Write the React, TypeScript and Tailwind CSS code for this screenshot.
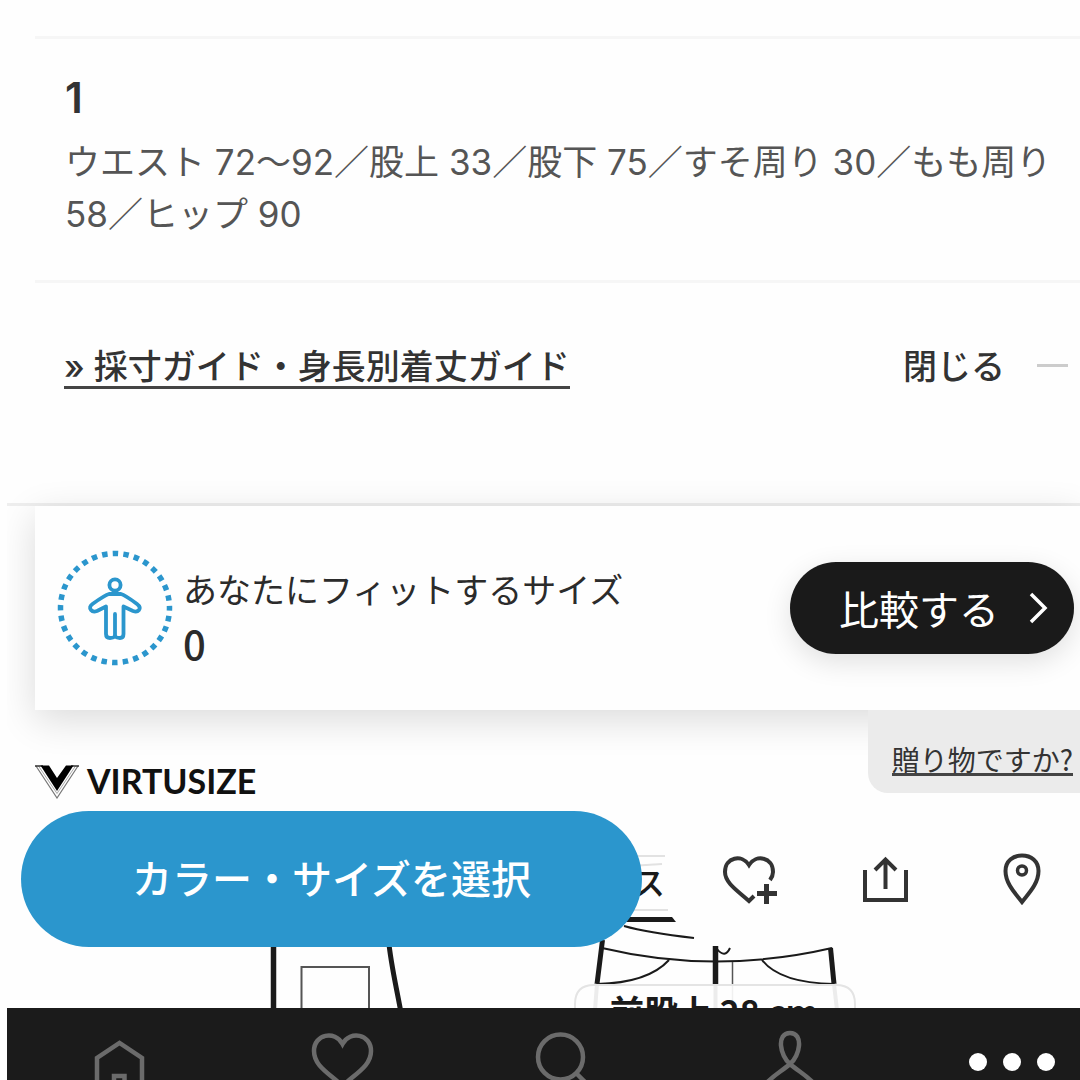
import React from 'react';

const NAV_COLOR = '#6b6b6b';

function BodyIcon() {
  return (
    <svg className="h-[116px] w-[116px] shrink-0" viewBox="57 550 116 116" fill="none" stroke="#2b96cd">
      <circle cx="115" cy="608" r="54.5" strokeWidth="5.5" strokeDasharray="5.500 5.200" strokeDashoffset="2.700" />
      <g strokeWidth="3.8" strokeLinejoin="round" strokeLinecap="round">
        <circle cx="115" cy="585" r="5.6" />
        <path d="M109 594 H121 Q125 595 137 604 Q141 607 139 610 Q137 612.500 133 611 L123.500 606.500 V634 Q123.500 638 120 638 Q116 638 115 636 Q114 638 110 638 Q106 638 106 634 V606.500 L97 611 Q93 612.500 91 610 Q88.500 607 92.500 604 Q105 595 109 594 Z" />
        <path d="M115 614 V636" />
      </g>
    </svg>
  );
}

function VirtusizeLogo() {
  return (
    <a href="#virtusize" className="mt-[55px] flex h-[33px] items-start gap-2 text-[#111]">
      <svg className="h-[34px] w-[44px]" viewBox="35 765 44 34" fill="none">
        <path d="M36 766 L57 798 L78 766" stroke="#777" strokeWidth="1.200" />
        <path d="M38.500 766 L57 793.500 L75.500 766" stroke="#aaa" strokeWidth="1" />
        <path d="M35 766 H43 M71 766 H79" stroke="#333" strokeWidth="1.600" />
        <path d="M40.500 765.500 H49 L57 778 L66 765.500 H73.500 L57 791 Z" fill="#000" />
      </svg>
      <span className="font-['Lato'] text-[34px] leading-[31px] font-bold">VIRTUSIZE</span>
    </a>
  );
}

function SizeDrawing() {
  return (
    <svg className="h-[210px] w-[900px] [grid-area:1/1]" viewBox="7 798 900 210" fill="none" stroke="#1a1a1a">
      {/* side view */}
      <path d="M273.500 940 V1010" strokeWidth="5.500" />
      <path d="M388.500 940 C391 965 396 985 400.500 1010" strokeWidth="5" />
      <path d="M301.500 1010 V967 H369 V1010" stroke="#555" strokeWidth="2" />

      {/* selected tab, mostly under the button */}
      <path d="M630 856 H665 M630 866 L662 864 M630 910 H668" stroke="#e2e2e2" strokeWidth="2" />
      <text x="633" y="895" fontSize="32" fontWeight="500" fill="#1a1a1a" stroke="none">ス</text>
      <path d="M620 917 H672 L676 922 H620 Z" fill="#1a1a1a" stroke="none" />
      <path d="M624 926 C645 932 668 935 694 938" strokeWidth="2" />

      {/* front view */}
      <path d="M602.500 940 L597 984" strokeWidth="5" />
      <path d="M830.500 948 L834 984" strokeWidth="5" />
      <path d="M715.500 946 V984" strokeWidth="5.500" />
      <path d="M602 948 Q715 975 832 948" strokeWidth="2" />
      <path d="M669 960 Q648 983 597 984 M762 960 Q780 983 834 984" strokeWidth="2" />
      <path d="M732.500 962 V984" stroke="#555" strokeWidth="1.500" />
      <path d="M717 949 Q725 959 730 948" strokeWidth="2" />
      <path d="M597 984 L595 1010 M715.500 984 V1010 M834 984 L837 1010" stroke="#ececec" strokeWidth="4" />
      <path d="M732.500 984 V1010" stroke="#f0f0f0" strokeWidth="1.500" />

      <path d="M575 1010 V1004 Q575 985 594 985 H836 Q855 985 855 1004 V1010" stroke="#e4e4e4" strokeWidth="2" />
      <text x="610" y="1025" fontSize="34" fontWeight="700" fill="#1a1a1a" stroke="none">前股上 28 cm</text>
    </svg>
  );
}

export default function App() {
  return (
    <div className="min-h-screen w-full overflow-hidden bg-[#fefefe] pl-[7px] font-['Noto_Sans_CJK_JP',sans-serif] text-[#333]">
      <div className="overflow-hidden">
        {/* Size details */}
        <section className="pt-9 pl-7">
          <div className="border-y-[3px] border-[#f6f6f6] pt-[33px] pr-5 pb-[40px] pl-[30px] font-['Inter','Noto_Sans_CJK_JP',sans-serif]">
            <h2 className="text-[42px] leading-[52px] font-semibold">1</h2>
            <p className="mt-3 text-[35px] leading-[52px] text-[#555]">
              ウエスト 72〜92／股上 33／股下 75／すそ周り 30／もも周り 58／ヒップ 90
            </p>
          </div>
          <div className="flex items-start justify-between pt-[65px] pr-3 pb-[114px] pl-[29px] text-[34px] leading-[38px] font-medium">
            <a href="#guide" className="border-b-[3px] border-[#444] font-['Inter','Noto_Sans_CJK_JP',sans-serif]">
              » 採寸ガイド・身長別着丈ガイド
            </a>
            <button type="button" className="flex items-center gap-8 leading-[34px]">
              閉じる
              <span className="h-[3px] w-[31px] bg-[#ccc]" />
            </button>
          </div>
        </section>

        {/* Virtusize card */}
        <section className="border-t-[3px] border-[#eee] pl-7">
          <div className="relative flex h-[204px] items-center bg-[#fefefe] pr-[6px] pl-[22px] shadow-[0_10px_36px_rgba(0,0,0,0.14)]">
            <BodyIcon />
            <div className="mt-4 ml-[10px] flex-1 text-[#2b2b2b]">
              <p className="text-[34px] leading-[54px]">あなたにフィットするサイズ</p>
              <p className="text-[40px] leading-[54px] font-medium">0</p>
            </div>
            <button
              type="button"
              className="flex h-[92px] w-[284px] items-center justify-between rounded-full bg-[#1a1a1a] pr-[26px] pl-[49px] text-[40px] text-white shadow-[0_8px_28px_rgba(0,0,0,0.12)]"
            >
              比較する
              <svg className="h-8 w-5" viewBox="0 0 20 32" fill="none" stroke="#fff" strokeWidth="3.500">
                <path d="M3 2 L17 16 L3 30" />
              </svg>
            </button>
          </div>
        </section>

        <div className="relative flex items-start justify-between pl-7">
          <VirtusizeLogo />
          <div className="rounded-bl-[20px] bg-[#ebebeb] pt-[35px] pr-[7px] pb-[17px] pl-6">
            <a href="#gift" className="block border-b-[3px] border-[#444] text-[28px] leading-[28px]">
              贈り物ですか?
            </a>
          </div>
        </div>

        {/* Action bar over the measurement drawing */}
        <div className="grid">
          <SizeDrawing />
          <div className="z-10 flex items-center gap-20 self-start pt-[13px] pr-[30px] pl-[14px] [grid-area:1/1]">
            <button type="button" className="h-[136px] flex-1 rounded-full bg-[#2b96cd] pb-1 text-[40px] font-medium text-white">
              カラー・サイズを選択
            </button>
            <button type="button" aria-label="お気に入りに追加">
              <svg className="h-14 w-14" viewBox="722 851 56 56" fill="none" stroke="#333" strokeWidth="4">
                <path d="M754 896 L749 901 C738 891 725 883 725 872 C725 857 742 854 749 865 C756 854 773 857 773 872 Q773 876 770 880" />
                <path d="M757 893.500 H777 M766.500 884 V904" strokeWidth="5" />
              </svg>
            </button>
            <button type="button" aria-label="シェア">
              <svg className="h-14 w-14" viewBox="858 851 56 56" fill="none" stroke="#333" strokeWidth="4">
                <path d="M865 870 V900 H906 V870 M885.500 889 V860 M875 870 L885.500 859.500 L896 870" />
              </svg>
            </button>
            <button type="button" aria-label="店舗在庫">
              <svg className="h-14 w-14" viewBox="994 851 56 56" fill="none" stroke="#333" strokeWidth="4">
                <path d="M1022 902 C1016 894 1005.500 884 1005.500 871 C1005.500 861 1013 855.500 1022 855.500 C1031 855.500 1038.500 861 1038.500 871 C1038.500 884 1028 894 1022 902 Z" />
                <circle cx="1022" cy="870.500" r="4.500" strokeWidth="3.500" />
              </svg>
            </button>
          </div>
        </div>

        {/* Bottom navigation */}
        <nav className="relative flex h-[72px] justify-between overflow-hidden bg-[#1b1b1b] pr-[37px] pl-[80px]">
          <a href="#home" aria-label="ホーム">
            <svg className="h-24 w-16" viewBox="87 1008 64 96" fill="none" stroke={NAV_COLOR} strokeWidth="4.500">
              <path d="M97 1090 V1058 L119.500 1043 L142 1058 V1090 Z M114 1090 V1076 H124.500 V1090" />
            </svg>
          </a>
          <a href="#favorites" aria-label="お気に入り">
            <svg className="h-24 w-16" viewBox="310 1008 64 96" fill="none" stroke={NAV_COLOR} strokeWidth="4.500">
              <path d="M341.500 1086 C328 1073 313 1066 313 1051 C313 1034 334 1030 341.500 1044 C349 1030 370 1034 370 1051 C370 1066 355 1073 341.500 1086 Z" />
            </svg>
          </a>
          <a href="#search" aria-label="検索">
            <svg className="h-24 w-16" viewBox="534 1008 64 96" fill="none" stroke={NAV_COLOR} strokeWidth="4.500">
              <circle cx="560.500" cy="1057" r="22.500" />
              <path d="M576 1073 L592 1089" />
            </svg>
          </a>
          <a href="#account" aria-label="マイページ">
            <svg className="h-24 w-16" viewBox="757 1008 64 96" fill="none" stroke={NAV_COLOR} strokeWidth="4.500">
              <path d="M760 1090 C766 1079 780 1072 789 1064 C799 1056 803 1033 789 1033 C775 1033 779 1056 789 1064 C798 1072 812 1079 818 1090" />
            </svg>
          </a>
          <button type="button" aria-label="メニュー" className="-mx-3 flex h-[108px] items-center gap-4">
            <span className="h-[18px] w-[18px] rounded-full bg-white" />
            <span className="h-[18px] w-[18px] rounded-full bg-white" />
            <span className="h-[18px] w-[18px] rounded-full bg-white" />
          </button>
        </nav>
      </div>
    </div>
  );
}
